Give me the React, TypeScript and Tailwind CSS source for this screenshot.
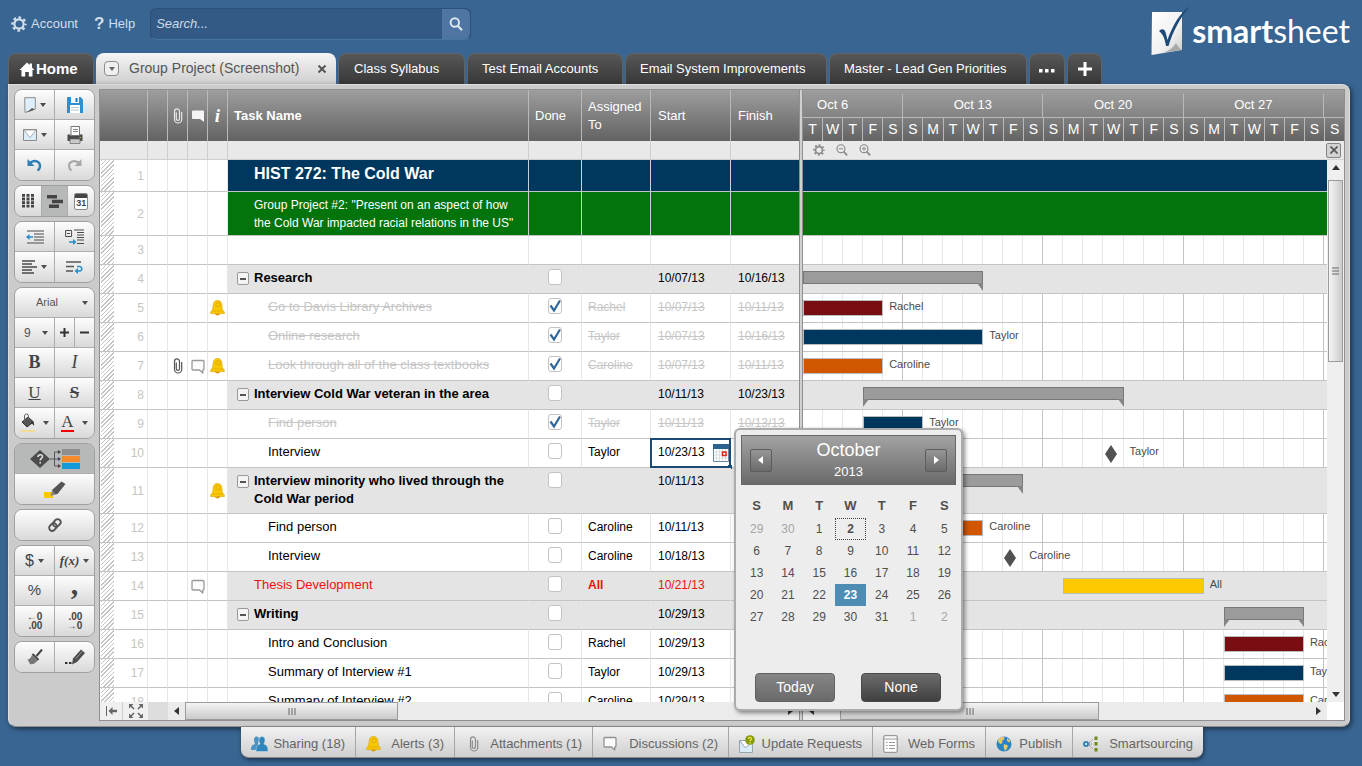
import React, { useState } from "react";

type Person = "Rachel" | "Taylor" | "Caroline" | "All";

interface Gantt {
  kind: "summary" | "bar" | "milestone";
  from: number;
  to: number;
  fill?: string;
  label?: Person;
  open?: boolean;
}

interface Row {
  id: number;
  task?: string;
  level?: "title" | "subtitle" | "parent" | "child" | "section";
  done?: boolean;
  who?: Person;
  start?: string;
  finish?: string;
  clip?: boolean;
  note?: boolean;
  bell?: boolean;
  selected?: boolean;
  height: string;
  gantt?: Gantt;
}

const DAYS = 27;
const RED = "bg-[#780d12]";
const NAVY = "bg-[#00375e]";
const ORANGE = "bg-[#d15600]";
const H = "h-[29px]";

const rows: Row[] = [
  { id: 1, task: "HIST 272: The Cold War", level: "title", height: "h-8" },
  {
    id: 2,
    task: 'Group Project #2: "Present on an aspect of how the Cold War impacted racial relations in the US"',
    level: "subtitle",
    height: "h-11",
  },
  { id: 3, height: H },
  { id: 4, task: "Research", level: "parent", done: false, start: "10/07/13", finish: "10/16/13", height: H, gantt: { kind: "summary", from: 0, to: 9, open: true } },
  { id: 5, task: "Go to Davis Library Archives", level: "child", done: true, who: "Rachel", start: "10/07/13", finish: "10/11/13", bell: true, height: H, gantt: { kind: "bar", from: 0, to: 4, fill: RED, label: "Rachel" } },
  { id: 6, task: "Online research", level: "child", done: true, who: "Taylor", start: "10/07/13", finish: "10/16/13", height: H, gantt: { kind: "bar", from: 0, to: 9, fill: NAVY, label: "Taylor" } },
  { id: 7, task: "Look through all of the class textbooks", level: "child", done: true, who: "Caroline", start: "10/07/13", finish: "10/11/13", clip: true, note: true, bell: true, height: H, gantt: { kind: "bar", from: 0, to: 4, fill: ORANGE, label: "Caroline" } },
  { id: 8, task: "Interview Cold War veteran in the area", level: "parent", done: false, start: "10/11/13", finish: "10/23/13", height: H, gantt: { kind: "summary", from: 3, to: 16 } },
  { id: 9, task: "Find person", level: "child", done: true, who: "Taylor", start: "10/11/13", finish: "10/13/13", height: H, gantt: { kind: "bar", from: 3, to: 6, fill: NAVY, label: "Taylor" } },
  { id: 10, task: "Interview", level: "child", done: false, who: "Taylor", start: "10/23/13", selected: true, height: H, gantt: { kind: "milestone", from: 15, to: 15, label: "Taylor" } },
  { id: 11, task: "Interview minority who lived through the Cold War period", level: "parent", done: false, start: "10/11/13", bell: true, height: "h-[46px]", gantt: { kind: "summary", from: 3, to: 11 } },
  { id: 12, task: "Find person", level: "child", done: false, who: "Caroline", start: "10/11/13", height: H, gantt: { kind: "bar", from: 3, to: 9, fill: ORANGE, label: "Caroline" } },
  { id: 13, task: "Interview", level: "child", done: false, who: "Caroline", start: "10/18/13", height: H, gantt: { kind: "milestone", from: 10, to: 10, label: "Caroline" } },
  { id: 14, task: "Thesis Development", level: "section", done: false, who: "All", start: "10/21/13", note: true, height: H, gantt: { kind: "bar", from: 13, to: 20, fill: "bg-[#fdca00]", label: "All" } },
  { id: 15, task: "Writing", level: "parent", done: false, start: "10/29/13", height: H, gantt: { kind: "summary", from: 21, to: 25 } },
  { id: 16, task: "Intro and Conclusion", level: "child", done: false, who: "Rachel", start: "10/29/13", height: H, gantt: { kind: "bar", from: 21, to: 25, fill: RED, label: "Rachel" } },
  { id: 17, task: "Summary of Interview #1", level: "child", done: false, who: "Taylor", start: "10/29/13", height: H, gantt: { kind: "bar", from: 21, to: 25, fill: NAVY, label: "Taylor" } },
  { id: 18, task: "Summary of Interview #2", level: "child", done: false, who: "Caroline", start: "10/29/13", height: H, gantt: { kind: "bar", from: 21, to: 25, fill: ORANGE, label: "Caroline" } },
];

function rowFill(level?: Row["level"]) {
  if (level === "title") return "bg-[#00375e]";
  if (level === "subtitle") return "bg-[#02740b]";
  if (level === "parent" || level === "section") return "bg-[#e4e4e4]";
  return "bg-white";
}

/* ---------- icons ---------- */

function Gear({ className }: { className?: string }) {
  return (
    <svg viewBox="0 0 16 16" className={className} fill="none" stroke="currentColor">
      <circle cx="8" cy="8" r="4.6" strokeWidth="2.2" />
      <circle cx="8" cy="8" r="6.5" strokeWidth="2.4" strokeDasharray="2.6 2.505" strokeDashoffset="1.3" />
    </svg>
  );
}

function Clip({ className }: { className?: string }) {
  return (
    <svg viewBox="0 0 10 16" className={className} fill="none" stroke="currentColor" strokeWidth="1.2">
      <path d="M3.3 4.5v6.3a1.6 1.6 0 0 0 3.2 0V3.4a2.5 2.5 0 0 0-5 0v8a3.6 3.6 0 0 0 7.2 0V4" />
    </svg>
  );
}

function Bubble({ className }: { className?: string }) {
  return (
    <svg viewBox="0 0 14 15" className={className} fill="#fbfbfb" stroke="currentColor" strokeWidth="1.3" strokeLinejoin="round">
      <path d="M2 1.500h10a1 1 0 0 1 1 1v7.500a1 1 0 0 1-1 1h-.2V14L8.500 11H2a1 1 0 0 1-1-1V2.500a1 1 0 0 1 1-1Z" />
    </svg>
  );
}

function Bell({ className }: { className?: string }) {
  return (
    <svg viewBox="0 0 15 16" className={className}>
      <path d="M7.500 0.500C4.800 0.500 3.400 2.400 3.200 5L2.700 9.500 0.700 12v1.600h13.600V12l-2-2.500L11.800 5C11.600 2.400 10.200 0.500 7.500 0.500Z" fill="#f8c800" stroke="#e0a800" strokeWidth="0.700" />
      <path d="M4.800 13.600h5.400c-.4 1.200-1.300 1.900-2.700 1.900s-2.300-.7-2.700-1.900Z" fill="#dd9a00" />
      <circle cx="8" cy="4.800" r="2.200" fill="none" stroke="#e3ab00" />
      <path d="M2.500 11h10" stroke="#e0a800" strokeWidth="0.800" />
    </svg>
  );
}

function Magnifier({ className, sign }: { className?: string; sign?: "plus" | "minus" }) {
  return (
    <svg viewBox="0 0 14 14" className={className} fill="none" stroke="currentColor">
      <circle cx="5.800" cy="5.500" r={sign ? 4.6 : 4.2} strokeWidth={sign ? 1.4 : 2} />
      <path d="m9 9 4 4.200" strokeWidth="2.200" />
      {sign && <path d="M3.400 5.500h4.800" strokeWidth="1.200" />}
      {sign === "plus" && <path d="M5.800 3.100v4.800" strokeWidth="1.200" />}
    </svg>
  );
}

function Caret({ className = "text-[#4d4d4d]" }: { className?: string }) {
  return (
    <svg viewBox="0 0 6 4" className={`h-1 w-1.5 shrink-0 ${className}`} fill="currentColor">
      <path d="M0 0h6L3 4Z" />
    </svg>
  );
}

function Arrow({ dir }: { dir: "up" | "down" | "left" | "right" }) {
  const d = {
    up: "M0 6 4 1l4 5Z",
    down: "M0 2l4 5 4-5Z",
    left: "M6 0 1 4l5 4Z",
    right: "M2 0l5 4-5 4Z",
  }[dir];
  return (
    <svg viewBox="0 0 8 8" className="h-2 w-2" fill="currentColor">
      <path d={d} />
    </svg>
  );
}

/* ---------- header ---------- */

function TopBar() {
  return (
    <header className="flex h-[53px] shrink-0 items-start justify-between pl-[11px] pr-3">
      <div className="flex items-center pt-2">
        <a href="#account" className="flex items-center gap-1 text-[13px] text-[#d3dfe9]">
          <Gear className="h-4 w-4" />
          Account
        </a>
        <a href="#help" className="ml-4 flex items-center gap-1 text-[13px] text-[#d3dfe9]">
          <span className="text-[17px] leading-4 font-bold">?</span>
          Help
        </a>
        <form className="ml-[15px] flex h-8 w-[321px] rounded-md border border-[#2c5077] border-b-[#4775a3] bg-[#335a85]">
          <input
            type="search"
            aria-label="Search"
            placeholder="Search..."
            className="min-w-0 flex-1 px-[5px] text-[13px] text-white italic outline-none placeholder:text-[#cfdbe6]"
          />
          <button type="button" aria-label="Search" className="flex w-7 items-center justify-center rounded-r-md bg-[#4f75a2] text-[#dfe6ee]">
            <Magnifier className="h-3.5 w-3.5" />
          </button>
        </form>
      </div>
      <a href="#home" className="flex items-start pt-[6px] text-white" aria-label="smartsheet">
        <svg viewBox="0 0 42 50" className="h-[50px] w-[42px]">
          <defs>
            <linearGradient id="sheet" x1="0" y1="0" x2="1" y2="1">
              <stop offset="0" stopColor="#ffffff" />
              <stop offset="0.600" stopColor="#f1f1f1" />
              <stop offset="1" stopColor="#cccccc" />
            </linearGradient>
          </defs>
          <path d="M2 6h30v38L1.500 49Z" fill="url(#sheet)" />
          <path d="M32 44 14 46.500c5-1.500 9-5 12-9.500 1.500 3 3.500 5.500 6 7Z" fill="#a9a9a9" />
          <path d="M9 25c3-3 5.500-2 6.500 1l2 8C22 21 29 7 40.500 0 31 10 23 25 18.500 40h-2.500c-1-7-3-12-7-15Z" fill="#1d4a78" />
        </svg>
        <span className="pt-[5px] font-['Lato',sans-serif] text-[32px] leading-10">
          <b className="font-bold">smart</b>
          <span>sheet</span>
        </span>
      </a>
    </header>
  );
}

const darkTab =
  "flex items-center rounded-t-lg border border-b-0 border-[#5d6469] bg-linear-to-b from-[#575757] to-[#383838] text-[13px] text-white";

function SheetTabs() {
  return (
    <nav className="flex h-[31px] shrink-0 gap-0.5 pl-2">
      <button className={`${darkTab} w-[86px] gap-px pl-2.5 text-[15px] font-bold`}>
        <svg viewBox="0 0 16 15" className="h-[15px] w-4" fill="currentColor">
          <path d="M8 0.500 10.500 3V1.500h2.500V5.500L15.500 8H13.500v6.500H9.800V10H6.200v4.500H2.500V8H0.500Z" />
        </svg>
        Home
      </button>
      <div className="flex w-60 items-center rounded-t-lg bg-linear-to-b from-[#f5f5f5] to-[#cfcfcf] px-2 text-[#555]">
        <button aria-label="Sheet menu" className="flex h-[15px] w-[15px] items-center justify-center rounded-sm border border-[#8d8d8d] bg-[#efefef]">
          <Caret className="text-[#666]" />
        </button>
        <button className="ml-[10px] text-[14px] whitespace-nowrap">Group Project (Screenshot)</button>
        <button aria-label="Close tab" className="ml-auto mr-0.5 text-[#555]">
          <svg viewBox="0 0 8 8" className="h-2 w-2" stroke="currentColor" strokeWidth="2">
            <path d="m0.500 0.500 7 7m0-7-7 7" />
          </svg>
        </button>
      </div>
      <button className={`${darkTab} w-[127px] px-[15px]`}>Class Syllabus</button>
      <button className={`${darkTab} w-[156px] px-[14px]`}>Test Email Accounts</button>
      <button className={`${darkTab} w-[202px] px-[14px]`}>Email System Improvements</button>
      <button className={`${darkTab} w-[198px] px-[14px]`}>Master - Lead Gen Priorities</button>
      <button aria-label="More tabs" className={`${darkTab} w-9 justify-center`}>
        <svg viewBox="0 0 16 4" className="mt-1 h-1 w-4" fill="currentColor">
          <path d="M0 0h3.500v3.500H0ZM6 0h3.500v3.500H6ZM12 0h3.500v3.500h-3.500Z" />
        </svg>
      </button>
      <button aria-label="New tab" className={`${darkTab} w-[35px] justify-center`}>
        <svg viewBox="0 0 14 14" className="h-3.5 w-3.5" stroke="currentColor" strokeWidth="3">
          <path d="M7 0v14M0 7h14" />
        </svg>
      </button>
    </nav>
  );
}

/* ---------- left toolbar ---------- */

function Group({ children }: { children: React.ReactNode }) {
  return (
    <div className="shrink-0 divide-y divide-[#adadad] overflow-hidden rounded-lg border border-[#a0a0a0]">{children}</div>
  );
}

function ToolRow({ children }: { children: React.ReactNode }) {
  return <div className="flex h-[30px] divide-x divide-[#adadad]">{children}</div>;
}

function Tool({ label, active, children }: { label: string; active?: boolean; children: React.ReactNode }) {
  return (
    <button
      aria-label={label}
      className={`flex min-w-0 flex-1 basis-0 items-center justify-center gap-1 text-[#444] ${
        active ? "bg-[#b7b9b9]" : "bg-linear-to-b from-[#fdfdfd] to-[#d9d9d9]"
      }`}
    >
      {children}
    </button>
  );
}

const serif = "font-['Liberation_Serif',serif]";

function Toolbar() {
  return (
    <aside className="flex w-[81px] shrink-0 flex-col gap-1">
      <Group>
        <ToolRow>
          <Tool label="New">
            <svg viewBox="0 0 12 16" className="h-4 w-3">
              <path d="M0.700 0.700h10.600V12L8 13 1 15.500Z" fill="#dff0fa" stroke="#8b8b8b" />
              <path d="m3 15.500 8-3-3-1.500Z" fill="#555" />
            </svg>
            <Caret />
          </Tool>
          <Tool label="Save">
            <svg viewBox="0 0 16 16" className="h-4 w-4">
              <path d="M1 0h12.500L16 2.500V16H0V1a1 1 0 0 1 1-1Z" fill="#2e8fd0" />
              <path d="M4 0h8v6H4Z" fill="#f2f8fc" />
              <path d="M8.500 1h2v4h-2Z" fill="#2378b8" />
              <path d="M3 8h10v8H3Z" fill="#fff" />
              <path d="M4 10.500h8M4 13h8" stroke="#b9c4cb" />
            </svg>
          </Tool>
        </ToolRow>
        <ToolRow>
          <Tool label="Mail">
            <svg viewBox="0 0 14 12" className="h-3 w-3.5">
              <path d="M0.500 0.500h13v11H0.500Z" fill="#d9ecf8" stroke="#8a8a8a" />
              <path d="M1 1h12L7 8.500Z" fill="#fff" stroke="#9a9a9a" strokeWidth="0.800" />
            </svg>
            <Caret />
          </Tool>
          <Tool label="Print">
            <svg viewBox="0 0 16 18" className="h-[18px] w-4">
              <path d="M4 0.500h8.500v9H4Z" fill="#fff" stroke="#777" />
              <path d="M6 3.500h5M6 5.500h5" stroke="#888" />
              <path d="M0.500 8.500h3V10h9V8.500h3V15H0.500Z" fill="#4a4a4a" />
              <path d="M3 13h10v4.500H3Z" fill="#c9c9c9" stroke="#666" strokeWidth="0.700" />
              <path d="M12.500 11h1.500v1h-1.500Z" fill="#8ed04a" />
            </svg>
          </Tool>
        </ToolRow>
        <ToolRow>
          <Tool label="Undo">
            <svg viewBox="0 0 15 14" className="h-3.5 w-[15px]">
              <path d="M3.500 4.500C8 1.500 13 3.500 13 8c0 2-1 3.500-2.500 4.500" fill="none" stroke="#2f7fb8" strokeWidth="2.400" />
              <path d="M0.500 1v7h7Z" fill="#2f7fb8" />
            </svg>
          </Tool>
          <Tool label="Redo">
            <svg viewBox="0 0 15 14" className="h-3.5 w-[15px]">
              <path d="M11.500 4.500C7 1.500 2 3.500 2 8c0 2 1 3.500 2.500 4.500" fill="none" stroke="#a8a8a8" strokeWidth="2.200" />
              <path d="M14.500 1v7h-7Z" fill="#a8a8a8" />
            </svg>
          </Tool>
        </ToolRow>
      </Group>

      <Group>
        <ToolRow>
          <Tool label="Grid view">
            <svg viewBox="0 0 12 14" className="h-3.5 w-3" fill="#444">
              {[0, 3.6, 7.2, 10.8].map((y) => (
                <path key={y} d={`M0 ${y}h3v2.800h-3ZM4.500 ${y}h3v2.800h-3ZM9 ${y}h3v2.800H9Z`} />
              ))}
            </svg>
          </Tool>
          <Tool label="Gantt view" active>
            <svg viewBox="0 0 16 13" className="h-[13px] w-4" fill="#444">
              <path d="M0 0h10v3.500H0ZM5 4.800h11v3.500H5ZM2 9.500h10V13H2Z" />
            </svg>
          </Tool>
          <Tool label="Calendar view">
            <span className="flex h-[17px] w-[14px] flex-col overflow-hidden rounded-xs border border-[#888] bg-white">
              <span className="h-1 bg-[#444]" />
              <span className="text-center text-[9px] leading-[11px] font-bold">31</span>
            </span>
          </Tool>
        </ToolRow>
      </Group>

      <Group>
        <ToolRow>
          <Tool label="Outdent">
            <svg viewBox="0 0 18 14" className="h-3.5 w-[18px]" fill="none" stroke="#4a4a4a">
              <path d="M1 1h17M8 4h10M8 7h10M8 10h10M1 13h17" strokeWidth="1.200" />
              <path d="M2 7h5" stroke="#2a8cc8" strokeWidth="1.600" />
              <path d="M0 7l3.500-3v6Z" fill="#2a8cc8" stroke="none" />
            </svg>
          </Tool>
          <Tool label="Indent">
            <svg viewBox="0 0 19 16" className="h-4 w-[19px]" fill="none" stroke="#4a4a4a">
              <path d="M0.600 1.500h6v6h-6ZM2 4.500h3" strokeWidth="1" />
              <path d="M9 1h10M12 3.500h7M12 6h7M12 8.500h7M12 11h7M12 14.500h7" strokeWidth="1.200" />
              <path d="M4 13h5" stroke="#2a8cc8" strokeWidth="1.600" />
              <path d="M11.500 13 8 10v6Z" fill="#2a8cc8" stroke="none" />
            </svg>
          </Tool>
        </ToolRow>
        <ToolRow>
          <Tool label="Align">
            <svg viewBox="0 0 15 14" className="h-3.5 w-[15px]" fill="none" stroke="#4a4a4a" strokeWidth="1.400">
              <path d="M0 1h13M0 4h10M0 7h15M0 10h10M0 13h12" />
            </svg>
            <Caret />
          </Tool>
          <Tool label="Wrap">
            <svg viewBox="0 0 17 13" className="h-[13px] w-[17px]" fill="none" stroke="#555">
              <path d="M0 1h15M0 5.500h8M0 10h7" strokeWidth="1.300" />
              <path d="M11 5.500h2.500a2.300 2.300 0 0 1 0 4.600H11" stroke="#2a8cc8" strokeWidth="1.500" />
              <path d="m8.500 10 3.500-3v6Z" fill="#2a8cc8" stroke="none" />
            </svg>
          </Tool>
        </ToolRow>
      </Group>

      <Group>
        <label className="relative flex h-[30px] items-center bg-linear-to-b from-[#fdfdfd] to-[#d9d9d9]">
          <select aria-label="Font" defaultValue="Arial" className="h-full w-full appearance-none pl-[21px] text-[11px] text-[#555]">
            <option>Arial</option>
          </select>
          <span className="pointer-events-none absolute right-1.5"><Caret /></span>
        </label>
        <ToolRow>
          <label className="relative flex flex-1 basis-0 items-center bg-linear-to-b from-[#fdfdfd] to-[#d9d9d9]">
            <select aria-label="Font size" defaultValue="9" className="h-full w-full appearance-none pl-[9px] text-[12px] text-[#555]">
              <option>9</option>
            </select>
            <span className="pointer-events-none absolute right-1.5"><Caret /></span>
          </label>
          <div className="flex flex-1 basis-0 divide-x divide-[#adadad]">
            <Tool label="Larger">
              <svg viewBox="0 0 9 9" className="h-[9px] w-[9px]" stroke="#333" strokeWidth="2"><path d="M4.500 0v9M0 4.500h9" /></svg>
            </Tool>
            <Tool label="Smaller">
              <svg viewBox="0 0 9 9" className="h-[9px] w-[9px]" stroke="#333" strokeWidth="2"><path d="M0 4.500h9" /></svg>
            </Tool>
          </div>
        </ToolRow>
        <ToolRow>
          <Tool label="Bold"><span className={`${serif} text-[18px] font-bold`}>B</span></Tool>
          <Tool label="Italic"><span className={`${serif} text-[18px] italic`}>I</span></Tool>
        </ToolRow>
        <ToolRow>
          <Tool label="Underline"><span className={`${serif} text-[17px] underline`}>U</span></Tool>
          <Tool label="Strikethrough"><span className={`${serif} text-[17px] font-bold line-through`}>S</span></Tool>
        </ToolRow>
        <ToolRow>
          <Tool label="Fill colour">
            <svg viewBox="0 0 14 20" className="mr-1 h-5 w-3.5">
              <path d="m1 9 6-5 5.500 5L6 14Z" fill="#555" stroke="#333" />
              <path d="M3.500 8V3a2 2 0 0 1 4 0v4" fill="none" stroke="#666" />
              <path d="M11 8c2 1 2.500 3 2 5-1-1.500-1.500-2.500-3-3Z" fill="#333" />
              <path d="M0 17h14v2H0Z" fill="#f4dc94" />
            </svg>
            <Caret />
          </Tool>
          <Tool label="Text colour">
            <span className={`${serif} mr-1 border-b-2 border-[#f00000] text-[17px] leading-4`}>A</span>
            <Caret />
          </Tool>
        </ToolRow>
      </Group>

      <Group>
        <ToolRow>
          <Tool label="Conditional formatting" active>
            <svg viewBox="0 0 50 20" className="h-5 w-[50px]">
              <path d="m0 10 10-9 10 9-10 9Z" fill="#4c4c4c" />
              <path d="M8 8c0-3 4.500-3 4.500-.5 0 1.800-2.300 1.800-2.300 4M10.200 13v1.500" fill="none" stroke="#ddd" strokeWidth="1.600" />
              <path d="M20 10h10M24.500 3v14M24.500 3h5M24.500 17h5" fill="none" stroke="#555" />
              <path d="m28 1 3 2-3 2ZM28 8l3 2-3 2ZM28 15l3 2-3 2Z" fill="#444" />
              <path d="M32 0h18v6H32Z" fill="#8e8e8e" />
              <path d="M32 7h18v6H32Z" fill="#f58b2c" />
              <path d="M32 14h18v6H32Z" fill="#129bd8" />
            </svg>
          </Tool>
        </ToolRow>
        <ToolRow>
          <Tool label="Highlight">
            <svg viewBox="0 0 22 17" className="h-[17px] w-[22px]">
              <path d="M0 11h9v6H0Z" fill="#fbc800" />
              <path d="m8 9 9.500-8.500L21.500 3l-8 10-3 .5Z" fill="#555" />
              <path d="m8 9-1.500 6 5-1.500Z" fill="#888" />
            </svg>
          </Tool>
        </ToolRow>
      </Group>

      <Group>
        <ToolRow>
          <Tool label="Link">
            <svg viewBox="0 0 16 16" className="h-4 w-4" fill="none" stroke="#555" strokeWidth="1.900">
              <rect x="6.800" y="1.800" width="6" height="8.200" rx="3" transform="rotate(45 9.800 6)" />
              <rect x="3" y="6" width="6" height="8.200" rx="3" transform="rotate(45 6 10)" />
            </svg>
          </Tool>
        </ToolRow>
      </Group>

      <Group>
        <ToolRow>
          <Tool label="Currency"><span className="text-[16px]">$</span><Caret /></Tool>
          <Tool label="Function">
            <span className={`${serif} text-[13px] font-bold italic`}>f(x)</span>
            <Caret />
          </Tool>
        </ToolRow>
        <ToolRow>
          <Tool label="Percent"><span className="text-[15px]">%</span></Tool>
          <Tool label="Thousands"><span className={`${serif} pb-3.5 text-[30px] leading-[10px] font-bold`}>,</span></Tool>
        </ToolRow>
        <ToolRow>
          <Tool label="Fewer decimals">
            <span className="flex flex-col text-right text-[10px] leading-[9px] font-bold"><span>←0</span><span>.00</span></span>
          </Tool>
          <Tool label="More decimals">
            <span className="flex flex-col text-right text-[10px] leading-[9px] font-bold"><span>.00</span><span>→0</span></span>
          </Tool>
        </ToolRow>
      </Group>

      <Group>
        <ToolRow>
          <Tool label="Format painter">
            <svg viewBox="0 0 16 16" className="h-4 w-4">
              <path d="m9.500 7 5.500-6.500M5.500 5l6 6" stroke="#444" strokeWidth="2" />
              <path d="m5 6 5.500 5.500C8 15.500 4 15.500 3 15L0.500 10.500C3 10 4 8.500 5 6Z" fill="#777" />
            </svg>
          </Tool>
          <Tool label="Edit style">
            <svg viewBox="0 0 20 16" className="h-4 w-5">
              <path d="M0 13h2.500v2H0ZM4 13h2.500v2H4Z" fill="#333" />
              <path d="m8 9.500 8-9 4 3.500-8 9-5 2.500Z" fill="#4c4c4c" />
              <path d="m10.500 10 6.500-7.500" stroke="#999" />
            </svg>
          </Tool>
        </ToolRow>
      </Group>
    </aside>
  );
}

/* ---------- grid ---------- */

function DoneBox({ id, checked }: { id: number; checked: boolean }) {
  const [on, setOn] = useState(checked);
  return (
    <span className="relative mx-auto block h-4 w-3.5">
      <input
        type="checkbox"
        aria-label={`Row ${id} done`}
        checked={on}
        onChange={() => setOn(!on)}
        className="block h-4 w-3.5 appearance-none rounded-[3px] border border-[#c3c3c3] bg-white"
      />
      {on && (
        <svg viewBox="0 0 12 14" className="pointer-events-none absolute top-px left-px h-3.5 w-3">
          <path d="M1.500 6.500 5 11.500 11 1.500" fill="none" stroke="#2f669b" strokeWidth="2.200" />
        </svg>
      )}
    </span>
  );
}

function Scroller({ thumb, children }: { thumb: string; children?: React.ReactNode }) {
  return (
    <div className="flex h-[18px] shrink-0 items-stretch bg-[#ebebeb] text-[#333]">
      {children}
      <div className="flex min-w-0 flex-1 items-center justify-between px-[5px]">
        <Arrow dir="left" />
        <div className="mx-1 flex h-full flex-1">
          <div className={`flex h-full items-center justify-center border border-[#9b9b9b] bg-linear-to-b from-[#f3f3f3] to-[#cbcbcb] ${thumb}`}>
            <svg viewBox="0 0 8 7" className="h-[7px] w-2" stroke="#666"><path d="M1 0v7M4 0v7M7 0v7" /></svg>
          </div>
        </div>
        <Arrow dir="right" />
      </div>
    </div>
  );
}

const thLine = "border-r border-[#b9b9b9]";
const th = `${thLine} px-[6px] text-left align-middle leading-[18px]`;

function GridTable() {
  return (
    <table className="w-[699px] table-fixed border-separate border-spacing-0">
      <colgroup>
        <col className="w-12" />
        <col className="w-5" />
        <col className="w-5" />
        <col className="w-5" />
        <col className="w-5" />
        <col className="w-[301px]" />
        <col className="w-[53px]" />
        <col className="w-[69px]" />
        <col className="w-20" />
        <col className="w-[68px]" />
      </colgroup>
      <thead>
        <tr className="h-[51px] bg-linear-to-b from-[#9e9e9e] to-[#636363] text-[13px] text-white">
          <th className={thLine} />
          <th className={thLine} />
          <th className={thLine}><Clip className="mx-auto h-4 w-2.5 text-[#e8e8e8]" /></th>
          <th className={thLine}>
            <svg viewBox="0 0 12 12" className="mx-auto h-3 w-3" fill="#f5f5f5"><path d="M1 0.500h10a1 1 0 0 1 1 1V12L8 9H1a1 1 0 0 1-1-1V1.500a1 1 0 0 1 1-1Z" /></svg>
          </th>
          <th className={`${thLine} ${serif} text-[19px] leading-5 font-bold italic`}>i</th>
          <th className={`${th} font-bold`}>Task Name</th>
          <th className={`${th} font-normal`}>Done</th>
          <th className={`${th} font-normal`}>Assigned To</th>
          <th className={`${th} pl-[7px] font-normal`}>Start</th>
          <th className="px-[7px] text-left font-normal">Finish</th>
        </tr>
        <tr className="h-[19px] bg-[#e9e9e9]">
          {Array.from({ length: 10 }, (_, i) => (
            <td key={i} className="border-r border-b border-[#cfcfcf] last:border-r-0" />
          ))}
        </tr>
      </thead>
      <tbody>
        {rows.map((r) => (
          <GridRow key={r.id} row={r} />
        ))}
      </tbody>
    </table>
  );
}

function GridRow({ row }: { row: Row }) {
  const { level } = row;
  const banner = level === "title" || level === "subtitle";
  const line = "border-b border-b-[#c4c4c4] border-r";
  const side = `${line} border-r-[#e6e6e6] bg-white p-0`;
  const tone = level === "section" ? "text-[#e8150b]" : row.done ? "text-[#c6c6c6] line-through" : "text-black";
  const cell = `${line} ${banner ? "border-r-[#c9d0d4]" : "border-r-[#e6e6e6]"} ${rowFill(level)} ${tone} pt-1 pr-0 pb-0 align-top leading-[18px] text-[12px]`;
  const taskText =
    level === "title"
      ? "pl-[26px] text-[16px] font-bold leading-5 text-white"
      : level === "subtitle"
        ? "pr-1 pl-[26px] text-[12px] text-white"
        : level === "parent"
          ? "pl-[26px] text-[13px] font-bold"
          : level === "section"
            ? "pl-[26px] text-[13px]"
            : "pl-10 text-[13px]";

  return (
    <tr className={row.height}>
      <td className={`${side} relative pr-[3px] text-right text-[12px] leading-4 text-[#c4c6c0]`}>
        <span
          aria-hidden="true"
          className="absolute inset-y-0 left-px w-[13px] bg-[repeating-linear-gradient(135deg,#c4c4c4_0px,#c4c4c4_1px,#ffffff_1px,#ffffff_3px)]"
        />
        {row.id}
      </td>
      <td className={side} />
      <td className={side}>{row.clip && <Clip className="mx-auto h-4 w-2.5 text-[#555]" />}</td>
      <td className={side}>{row.note && <Bubble className="mx-auto h-[15px] w-3.5 text-[#999]" />}</td>
      <td className={side}>{row.bell && <Bell className="mx-auto h-4 w-[15px]" />}</td>
      <td className={cell}>
        <div className={`relative ${taskText}`}>
          {level === "parent" && (
            <button aria-label={`Collapse ${row.task}`} className="absolute top-[3px] left-[9px] flex h-[13px] w-3 items-center justify-center rounded-xs border border-[#999] bg-[#f4f4f4]">
              <span className="h-0.5 w-1.5 bg-[#555]" />
            </button>
          )}
          {row.task}
        </div>
      </td>
      <td className={cell}>{row.done !== undefined && <DoneBox id={row.id} checked={row.done} />}</td>
      <td className={`${cell} pl-[6px] ${level === "section" ? "font-bold" : ""}`}>{row.who}</td>
      <td className={`${cell} relative pl-[7px]`}>
        {row.start}
        {row.selected && (
          <span className="pointer-events-none absolute -top-px -right-px -bottom-px -left-px border-2 border-[#1b4a76]">
            <svg viewBox="0 0 16 18" className="absolute top-1 right-0 h-[18px] w-4">
              <path d="M0.500 0.500h15v17H0.500Z" fill="#fff" stroke="#6d8aa5" />
              <path d="M0 0h16v5H0Z" fill="#2c628f" />
              <path d="M3.500 5v12M6.500 5v12M9.500 5v12M12.500 5v12M1 8h14M1 11h14M1 14h14" stroke="#ccd2d8" strokeWidth="0.700" />
              <path d="M9.500 8h3.500v3.500H9.500Z" fill="#fff" stroke="#e02010" strokeWidth="1.500" />
            </svg>
            <span className="absolute -right-[3px] -bottom-[3px] h-1 w-1 bg-[#1b4a76]" />
          </span>
        )}
      </td>
      <td className={`${cell} border-r-0 pl-[7px]`}>{row.finish}</td>
    </tr>
  );
}

function GridPane() {
  return (
    <section className="flex w-[700px] shrink-0 flex-col border-l border-[#8f8f8f] bg-white">
      <div className="min-h-0 flex-1 overflow-hidden">
        <GridTable />
      </div>
      <Scroller thumb="w-[213px]">
        <button aria-label="Hide columns" className="flex w-[23px] items-center justify-center border-r border-[#cfcfcf] bg-[#f0f0f0]">
          <svg viewBox="0 0 11 10" className="h-2.5 w-[11px]" fill="#666"><path d="M0 0h1v10H0ZM2.500 5 6.500 1v2.700H11v2.600H6.500V9Z" /></svg>
        </button>
        <button aria-label="Full screen" className="flex w-[25px] items-center justify-center bg-[#f0f0f0]">
          <svg viewBox="0 0 14 14" className="h-3.5 w-3.5" fill="#666" stroke="#666" strokeWidth="1.600">
            <path d="m1 1 4 4M13 1 9 5M1 13l4-4M13 13 9 9" />
            <path d="M0 0h4.500L0 4.500ZM14 0v4.500L9.500 0ZM0 14V9.500L4.500 14ZM14 14H9.500L14 9.500Z" stroke="none" />
          </svg>
        </button>
        <span className="w-5 bg-[#dcdcdc]" />
      </Scroller>
    </section>
  );
}

/* ---------- gantt ---------- */

const dayLetters = "TWTFSSMTWTFSSMTWTFSSMTWTFSS".split("");
const isWeekEnd = (i: number) => i % 7 === 4;

function SummaryEnd({ right }: { right?: boolean }) {
  return (
    <svg viewBox="0 0 7 8" className={`absolute top-3 h-2 w-[7px] ${right ? "right-0" : "left-0"}`}>
      {right ? <path d="M7 0v8L1 0Z" fill="#858585" /> : <path d="M0 0v8L6 0Z" fill="#858585" />}
    </svg>
  );
}

function GanttItem({ item }: { item: Gantt }) {
  const place = {
    left: `${(item.from / DAYS) * 100}%`,
    width: `${((item.to - item.from) / DAYS) * 100}%`,
  };
  if (item.kind === "summary") {
    return (
      <div className="absolute top-1.5" style={place}>
        <div className="h-[13px] border border-[#777] bg-[#9b9b9b]" />
        {!item.open && <SummaryEnd />}
        <SummaryEnd right />
      </div>
    );
  }
  if (item.kind === "milestone") {
    return (
      <div className="absolute top-1 flex items-start pl-px" style={{ left: place.left }}>
        <svg viewBox="0 0 12 18" className="mt-0.5 h-[18px] w-3" fill="#515151"><path d="m6 0 6 9-6 9-6-9Z" /></svg>
        <span className="pl-[13px] text-[11px] leading-4 text-[#4a4a4a]">{item.label}</span>
      </div>
    );
  }
  return (
    <div className="absolute top-1.5" style={place}>
      <div className={`h-4 border border-[#bcbcbc] ${item.fill}`} />
      <span className="absolute -top-0.5 left-full pl-1.5 text-[11px] leading-4 text-[#4a4a4a]">{item.label}</span>
    </div>
  );
}

function GanttRow({ row }: { row: Row }) {
  const plain = row.level === undefined || row.level === "child";
  return (
    <div className={`relative flex border-b border-[#c4c4c4] ${row.height} ${rowFill(row.level)}`}>
      {plain &&
        dayLetters.map((_, i) => (
          <span key={i} className={`flex-1 border-r ${isWeekEnd(i) ? "border-[#c2c2c2]" : "border-[#e8e8e8]"}`} />
        ))}
      {row.gantt && <GanttItem item={row.gantt} />}
    </div>
  );
}

function GanttPane() {
  return (
    <section className="flex min-w-0 flex-1 flex-col overflow-hidden bg-white">
      <div className="grid h-7 shrink-0 grid-cols-[5fr_7fr_7fr_7fr_1fr] border-b border-[#b9b9b9] bg-linear-to-b from-[#9e9e9e] to-[#838383] pt-1 text-center text-[13px] leading-[22px] text-white">
        <span className="border-r border-[#b9b9b9] pr-10">Oct 6</span>
        <span className="border-r border-[#b9b9b9]">Oct 13</span>
        <span className="border-r border-[#b9b9b9]">Oct 20</span>
        <span className="border-r border-[#b9b9b9]">Oct 27</span>
        <span />
      </div>
      <div className="flex h-[23px] shrink-0 bg-linear-to-b from-[#808080] to-[#636363] text-[14px] leading-[22px] text-white">
        {dayLetters.map((d, i) => (
          <span key={i} className="flex-1 basis-0 border-r border-[#b9b9b9] text-center last:border-r-0">{d}</span>
        ))}
      </div>
      <div className="flex h-[19px] shrink-0 items-center gap-[11px] border-b border-[#d5d5d5] bg-[#e9e9e9] pr-[3px] pl-2.5 text-[#8c8c8c]">
        <button aria-label="Gantt settings"><Gear className="h-3 w-3" /></button>
        <button aria-label="Zoom out"><Magnifier sign="minus" className="h-3 w-3" /></button>
        <button aria-label="Zoom in"><Magnifier sign="plus" className="h-3 w-3" /></button>
        <button aria-label="Close gantt" className="ml-auto flex h-[15px] w-[15px] items-center justify-center rounded-xs border border-[#858585] bg-[#d2d2d2]">
          <svg viewBox="0 0 8 8" className="h-2 w-2" stroke="#555" strokeWidth="1.600"><path d="m0.500 0.500 7 7m0-7-7 7" /></svg>
        </button>
      </div>
      <div className="relative min-h-0 flex-1 overflow-hidden">
        {rows.map((r) => (
          <GanttRow key={r.id} row={r} />
        ))}
        <div className="absolute inset-y-0 right-0 flex w-[17px] flex-col items-center bg-[#efefef] py-1 text-[#333]">
          <Arrow dir="up" />
          <div className="mt-2 flex h-[182px] w-[15px] items-center justify-center border border-[#9b9b9b] bg-linear-to-r from-[#f5f5f5] to-[#cbcbcb]">
            <svg viewBox="0 0 7 8" className="h-2 w-[7px]" stroke="#666"><path d="M0 1h7M0 4h7M0 7h7" /></svg>
          </div>
          <span className="flex-1" />
          <Arrow dir="down" />
        </div>
      </div>
      <div className="flex">
        <div className="min-w-0 flex-1">
          <Scroller thumb="ml-5 w-[259px]" />
        </div>
        <span className="w-[17px] bg-white" />
      </div>
    </section>
  );
}

/* ---------- date picker ---------- */

const calendar = [
  [29, 30, 1, 2, 3, 4, 5],
  [6, 7, 8, 9, 10, 11, 12],
  [13, 14, 15, 16, 17, 18, 19],
  [20, 21, 22, 23, 24, 25, 26],
  [27, 28, 29, 30, 31, 1, 2],
];

function DatePicker() {
  const [picked, setPicked] = useState(23);
  const step =
    "flex h-[23px] w-[22px] items-center justify-center rounded-xs border border-[#5c5c5c] bg-linear-to-b from-[#969696] to-[#6b6b6b]";

  return (
    <div className="absolute top-[338px] left-[635px] flex h-[283px] w-[229px] flex-col rounded-md border-2 border-[#acacac] bg-[#ededed] p-[5px] shadow-[2px_2px_4px_rgba(0,0,0,0.45)]">
      <div className="flex h-[50px] shrink-0 items-center justify-between border border-[#666] bg-linear-to-b from-[#a3a3a3] to-[#6a6a6a] px-2 text-white">
        <button aria-label="Previous month" className={step}><Arrow dir="left" /></button>
        <div className="text-center">
          <div className="text-[18px] leading-6">October</div>
          <div className="text-[13px] leading-5">2013</div>
        </div>
        <button aria-label="Next month" className={step}><Arrow dir="right" /></button>
      </div>
      <table className="mt-2 w-[219px] table-fixed text-center text-[12px] text-[#4f4f4f]">
        <thead>
          <tr className="h-[25px]">
            {"SMTWTFS".split("").map((d, i) => (
              <th key={i} className="p-0 text-[13px] font-bold">{d}</th>
            ))}
          </tr>
        </thead>
        <tbody>
          {calendar.map((week, w) => (
            <tr key={w} className="h-[22px]">
              {week.map((d) => {
                const other = (w === 0 && d > 7) || (w === 4 && d < 7);
                const tone = other
                  ? "text-[#a6a6a6]"
                  : d === picked
                    ? "bg-[#4d8db4] font-bold text-white"
                    : d === 2
                      ? "border border-dotted border-[#444] font-bold"
                      : "";
                return (
                  <td key={d} className="p-0">
                    <button onClick={() => setPicked(d)} className={`block h-[22px] w-full ${tone}`}>{d}</button>
                  </td>
                );
              })}
            </tr>
          ))}
        </tbody>
      </table>
      <div className="mt-auto mb-[2px] flex justify-between pr-[15px] pl-[14px] text-[14px] text-white">
        <button className="h-[29px] w-20 rounded-sm border border-[#616161] bg-linear-to-b from-[#868686] to-[#6a6a6a]">Today</button>
        <button className="h-[29px] w-20 rounded-sm border border-[#4a4a4a] bg-linear-to-b from-[#6c6c6c] to-[#404040]">None</button>
      </div>
    </div>
  );
}

/* ---------- footer ---------- */

const links = [
  {
    label: "Sharing (18)",
    width: "w-[115px]",
    icon: (
      <svg viewBox="0 0 17 16" className="h-4 w-[17px]">
        <path d="M3 3.500a2.500 3 0 0 1 5 0c0 1.500-.5 2.500-1 3.500l1.500 7H0C0 11 .5 9 4 8 3.300 6.500 3 5 3 3.500Z" fill="#4d92c2" />
        <path d="M8 4a3 3.500 0 0 1 6 0c0 1.800-.6 3-1.200 4 3 1 4.200 2.500 4.200 7.500H5c0-5 1.200-6.500 4.200-7.500C8.600 7 8 5.800 8 4Z" fill="#2f86bd" stroke="#cfe0ea" strokeWidth="0.500" />
      </svg>
    ),
  },
  { label: "Alerts (3)", width: "w-[99px]", icon: <Bell className="h-4 w-[15px]" /> },
  { label: "Attachments (1)", width: "w-[138px]", icon: <Clip className="mx-1 h-4 w-2.5 text-[#8d8d8d]" /> },
  { label: "Discussions (2)", width: "w-[136px]", icon: <Bubble className="h-[15px] w-3.5 text-[#929292]" /> },
  {
    label: "Update Requests",
    width: "w-36",
    icon: (
      <svg viewBox="0 0 16 18" className="h-[18px] w-4">
        <path d="M0.500 5.500h13v12H0.500Z" fill="#d9ebf6" stroke="#98a4ac" />
        <path d="m1 6 5.500 7L13 6" fill="#fff" stroke="#98a4ac" />
        <circle cx="11" cy="5" r="4.800" fill="#869a0c" />
        <path d="M9.500 4c0-2 3-2 3-.3 0 1.200-1.500 1.200-1.500 2.500M11 7.200v1.200" fill="none" stroke="#f3e43c" strokeWidth="1.300" />
      </svg>
    ),
  },
  {
    label: "Web Forms",
    width: "w-[113px]",
    icon: (
      <svg viewBox="0 0 15 18" className="h-[18px] w-[15px]" fill="none" stroke="#999">
        <rect x="0.700" y="0.700" width="13.600" height="16.600" rx="1.500" fill="#fff" strokeWidth="1.300" />
        <path d="M1 4h13M6 7.500h6M6 10.500h6M6 13.500h6M3 7.500h1.500M3 10.500h1.500M3 13.500h1.500" />
      </svg>
    ),
  },
  {
    label: "Publish",
    width: "w-[87px]",
    icon: (
      <svg viewBox="0 0 16 16" className="h-4 w-4">
        <circle cx="8" cy="8" r="7.500" fill="#2684c2" />
        <path d="M2 3.500C4 1 6.500.5 8.500 1L8 3.500 6 5 6.500 7 4.500 8 2.500 6.500ZM8 8l4 1.500-1 3-2 2.500-1.500-4ZM11 2l3.500 3-1.500 1.500L11 5Z" fill="#e8c860" />
      </svg>
    ),
  },
  {
    label: "Smartsourcing",
    width: "w-[130px]",
    icon: (
      <svg viewBox="0 0 16 16" className="h-4 w-4">
        <circle cx="3" cy="8" r="2" fill="#fff" stroke="#2f86bd" strokeWidth="2" />
        <path d="m6 7 4-4M6 8h4M6 9l4 4" stroke="#777" strokeDasharray="1 1" />
        <path d="M11.500 0.500h3v3.500h-3ZM11.500 6h3v3.500h-3ZM11.500 12h3v3.500h-3Z" fill="#6c8c12" />
      </svg>
    ),
  },
];

function Footer() {
  return (
    <footer className="flex h-[39px] shrink-0 items-start pl-[241px]">
      <nav className="flex h-[31px] overflow-hidden rounded-b-lg border-b border-[#8a8a8a] bg-linear-to-b from-[#f2f2f2] to-[#cfcfcf] shadow-[1px_2px_4px_rgba(0,0,0,0.5)]">
        {links.map((l) => (
          <a key={l.label} href="#panel" className={`flex items-center justify-between border-r border-[#a5a5a5] px-2.5 pt-[3px] text-[13px] whitespace-nowrap text-[#656565] last:border-r-0 ${l.width}`}>
            {l.icon}
            {l.label}
          </a>
        ))}
      </nav>
    </footer>
  );
}

export default function App() {
  return (
    <div className="flex h-screen flex-col overflow-hidden bg-[#396592] font-['Liberation_Sans',Arial,sans-serif]">
      <TopBar />
      <SheetTabs />
      <main className="mr-3 ml-2 flex min-h-0 flex-1 gap-1 rounded-lg rounded-tl-none border border-[#dedede] border-b-[#8f8f8f] bg-[#cbcbcb] pt-1 pr-1 pb-[5px] pl-[5px] shadow-[2px_2px_5px_rgba(0,0,0,0.5)]">
        <Toolbar />
        <div className="relative flex min-w-0 flex-1 border-t border-r border-b border-[#8f8f8f]">
          <GridPane />
          <div className="w-1 shrink-0 border-x border-[#8f8f8f] bg-[#d0d0d0]" />
          <GanttPane />
          <DatePicker />
        </div>
      </main>
      <Footer />
    </div>
  );
}
